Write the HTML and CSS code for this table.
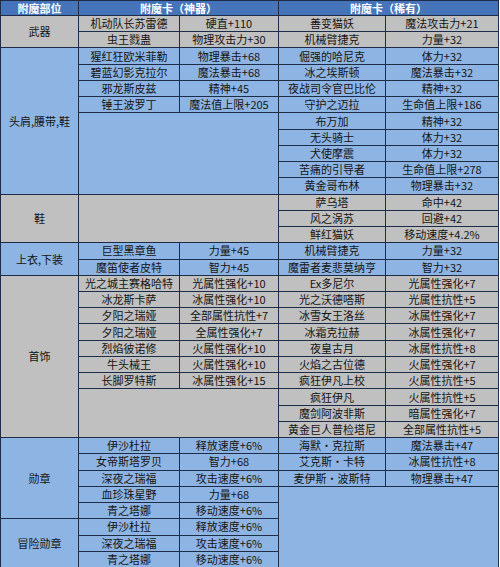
FILE: index.html
```html
<!DOCTYPE html>
<html lang="zh-CN">
<head>
<meta charset="utf-8">
<title>附魔表</title>
<link rel="stylesheet" href="styles.css">
</head>
<body>
<div class="sheet">
  <div class="cell head">附魔部位</div>
  <div class="cell head w2">附魔卡（神器）</div>
  <div class="cell head w2">附魔卡（稀有）</div>

  <div class="cell gray h2">武器</div>
  <div class="cell gray">机动队长苏雷德</div><div class="cell gray">硬直+110</div><div class="cell gray">善变猫妖</div><div class="cell gray">魔法攻击力+21</div>
  <div class="cell gray">虫王戮蛊</div><div class="cell gray">物理攻击力+30</div><div class="cell gray">机械臂捷克</div><div class="cell gray">力量+32</div>

  <div class="cell blue h9">头肩,腰带,鞋</div>
  <div class="cell blue">猩红狂欧米菲勒</div><div class="cell blue">物理暴击+68</div><div class="cell blue">倔强的哈尼克</div><div class="cell blue">体力+32</div>
  <div class="cell blue">碧蓝幻影克拉尔</div><div class="cell blue">魔法暴击+68</div><div class="cell blue">冰之埃斯顿</div><div class="cell blue">魔法暴击+32</div>
  <div class="cell blue">邪龙斯皮兹</div><div class="cell blue">精神+45</div><div class="cell blue">夜战司令官巴比伦</div><div class="cell blue">精神+32</div>
  <div class="cell blue">锤王波罗丁</div><div class="cell blue">魔法值上限+205</div><div class="cell blue">守护之迈拉</div><div class="cell blue">生命值上限+186</div>
  <div class="cell blue w2 h5"></div><div class="cell blue">布万加</div><div class="cell blue">精神+32</div>
  <div class="cell blue">无头骑士</div><div class="cell blue">体力+32</div>
  <div class="cell blue">犬使摩震</div><div class="cell blue">体力+32</div>
  <div class="cell blue">苦痛的引导者</div><div class="cell blue">生命值上限+278</div>
  <div class="cell blue">黄金哥布林</div><div class="cell blue">物理暴击+32</div>

  <div class="cell gray h3">鞋</div>
  <div class="cell gray w2 h3"></div><div class="cell gray">萨乌塔</div><div class="cell gray">命中+42</div>
  <div class="cell gray">风之涡苏</div><div class="cell gray">回避+42</div>
  <div class="cell gray">鲜红猫妖</div><div class="cell gray">移动速度+4.2%</div>

  <div class="cell blue h2">上衣,下装</div>
  <div class="cell blue">巨型黑章鱼</div><div class="cell blue">力量+45</div><div class="cell blue">机械臂捷克</div><div class="cell blue">力量+32</div>
  <div class="cell blue">魔笛使者皮特</div><div class="cell blue">智力+45</div><div class="cell blue">魔雷者麦悲莫纳亨</div><div class="cell blue">智力+32</div>

  <div class="cell gray h10">首饰</div>
  <div class="cell gray">光之城主赛格哈特</div><div class="cell gray">光属性强化+10</div><div class="cell gray">Ex多尼尔</div><div class="cell gray">光属性强化+7</div>
  <div class="cell gray">冰龙斯卡萨</div><div class="cell gray">冰属性强化+10</div><div class="cell gray">光之沃德嗒斯</div><div class="cell gray">光属性抗性+5</div>
  <div class="cell gray">夕阳之瑞娅</div><div class="cell gray">全部属性抗性+7</div><div class="cell gray">冰雪女王洛丝</div><div class="cell gray">冰属性强化+7</div>
  <div class="cell gray">夕阳之瑞娅</div><div class="cell gray">全属性强化+7</div><div class="cell gray">冰霜克拉赫</div><div class="cell gray">冰属性强化+7</div>
  <div class="cell gray">烈焰彼诺修</div><div class="cell gray">火属性强化+10</div><div class="cell gray">夜皇古月</div><div class="cell gray">冰属性抗性+8</div>
  <div class="cell gray">牛头械王</div><div class="cell gray">火属性强化+10</div><div class="cell gray">火焰之古位德</div><div class="cell gray">火属性强化+7</div>
  <div class="cell gray">长脚罗特斯</div><div class="cell gray">冰属性强化+15</div><div class="cell gray">疯狂伊凡上校</div><div class="cell gray">火属性抗性+5</div>
  <div class="cell gray w2 h3"></div><div class="cell gray">疯狂伊凡</div><div class="cell gray">火属性抗性+5</div>
  <div class="cell gray">魔剑阿波非斯</div><div class="cell gray">暗属性强化+7</div>
  <div class="cell gray">黄金巨人普检塔尼</div><div class="cell gray">全部属性抗性+5</div>

  <div class="cell blue h5">勋章</div>
  <div class="cell blue">伊沙杜拉</div><div class="cell blue">释放速度+6%</div><div class="cell blue">海默·克拉斯</div><div class="cell blue">魔法暴击+47</div>
  <div class="cell blue">女帝斯塔罗贝</div><div class="cell blue">智力+68</div><div class="cell blue">艾克斯·卡特</div><div class="cell blue">冰属性抗性+8</div>
  <div class="cell blue">深夜之瑞福</div><div class="cell blue">攻击速度+6%</div><div class="cell blue">麦伊斯·波斯特</div><div class="cell blue">物理暴击+47</div>
  <div class="cell blue">血珍珠星野</div><div class="cell blue">力量+68</div><div class="cell blue w2 h5"></div>
  <div class="cell blue">青之塔娜</div><div class="cell blue">移动速度+6%</div>

  <div class="cell blue h3">冒险勋章</div>
  <div class="cell blue">伊沙杜拉</div><div class="cell blue">释放速度+6%</div>
  <div class="cell blue">深夜之瑞福</div><div class="cell blue">攻击速度+6%</div>
  <div class="cell blue">青之塔娜</div><div class="cell blue">移动速度+6%</div>
</div>
</body>
</html>
```
FILE: styles.css
```css
html, body {
  margin: 0;
  padding: 0;
  background: #ffffff;
}
.sheet {
  display: grid;
  grid-template-columns: 77px 100px 98px 106px 112px;
  grid-template-rows: 14px;
  grid-auto-rows: 15.24px;
  gap: 1px;
  padding: 1px;
  width: max-content;
  background: #1d2d48;
  font-family: "Noto Sans CJK SC", "Noto Sans", sans-serif;
  font-size: 11px;
  color: #141414;
}
.cell {
  display: flex;
  align-items: center;
  justify-content: center;
  white-space: nowrap;
  overflow: hidden;
  line-height: 13px;
}
.head {
  background: #4674bb;
  color: #ffffff;
  font-weight: bold;
}
.gray { background: #c0c0c0; }
.blue { background: #8eb4e3; }
.w2 { grid-column: span 2; }
.h2 { grid-row: span 2; }
.h3 { grid-row: span 3; }
.h5 { grid-row: span 5; }
.h9 { grid-row: span 9; }
.h10 { grid-row: span 10; }
```
